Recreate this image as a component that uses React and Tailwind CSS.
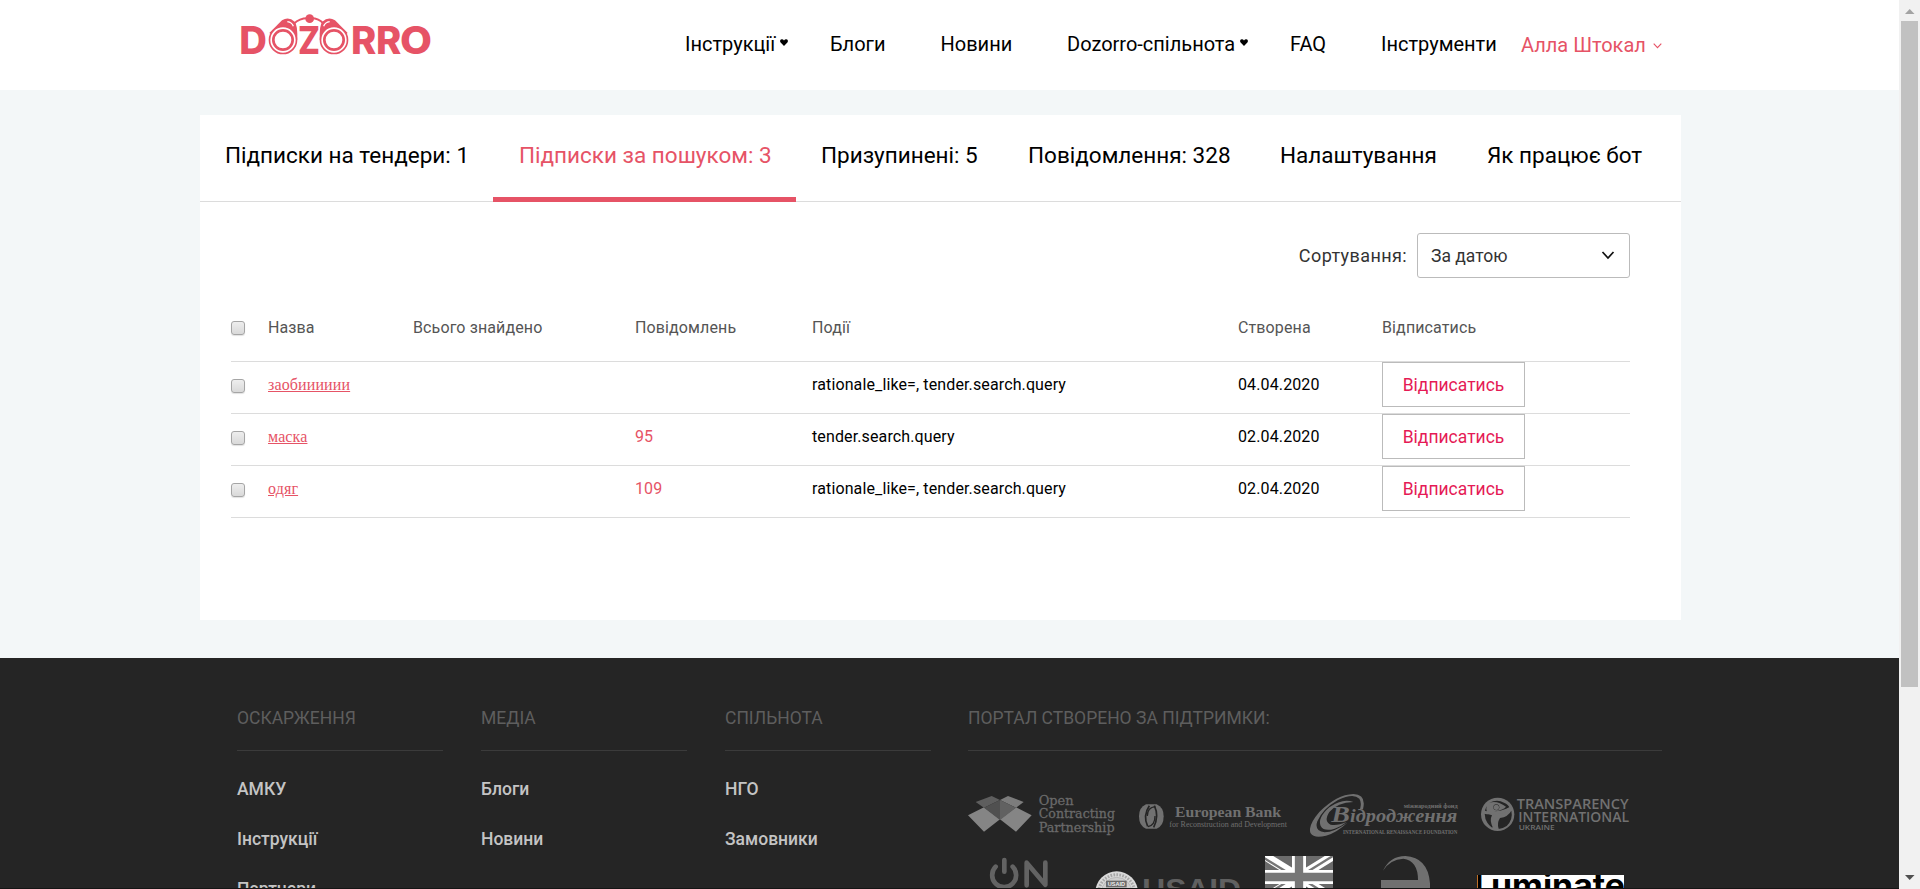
const nav = [
  { label: 'Інструкції', heart: true, w: 'w-[145px]' },
  { label: 'Блоги', w: 'w-[110.5px]' },
  { label: 'Новини', w: 'w-[126.5px]' },
  { label: 'Dozorro-спільнота', heart: true, w: 'w-[223px]' },
  { label: 'FAQ', w: 'w-[91px]' },
  { label: 'Інструменти', w: 'w-[140px]' },
];

const tabs = [
  { label: 'Підписки на тендери: 1', w: 'w-[293px]' },
  { label: 'Підписки за пошуком: 3', w: 'w-[303px]', active: true },
  { label: 'Призупинені: 5', w: 'w-[207px]' },
  { label: 'Повідомлення: 328', w: 'w-[252px]' },
  { label: 'Налаштування', w: 'w-[207px]' },
  { label: 'Як працює бот', w: 'w-[219px]' },
];

const rows = [
  { name: 'заобииииии', count: '', events: 'rationale_like=, tender.search.query', date: '04.04.2020' },
  { name: 'маска', count: '95', events: 'tender.search.query', date: '02.04.2020' },
  { name: 'одяг', count: '109', events: 'rationale_like=, tender.search.query', date: '02.04.2020' },
];

const footerCols = [
  { title: 'ОСКАРЖЕННЯ', links: ['АМКУ', 'Інструкції', 'Партнери'], gap: 'mr-[38px]' },
  { title: 'МЕДІА', links: ['Блоги', 'Новини'], gap: 'mr-[38px]' },
  { title: 'СПІЛЬНОТА', links: ['НГО', 'Замовники'], gap: 'mr-[37px]' },
];

const GRID = 'grid grid-cols-[37px_145px_222px_177px_426px_144px_1fr]';

function Logo() {
  return (
    <svg className="block h-[60px] w-[210px]" viewBox="0 0 630 180" fill="#e65366">
      <g fontFamily="Inter" fontWeight="800" fontSize="113">
        <text x="28" y="146" textLength="83" lengthAdjust="spacingAndGlyphs">D</text>
        <text x="204" y="146" textLength="66" lengthAdjust="spacingAndGlyphs">Z</text>
        <text x="363" y="146" textLength="76" lengthAdjust="spacingAndGlyphs">R</text>
        <text x="438" y="146" textLength="76" lengthAdjust="spacingAndGlyphs">R</text>
        <text x="510" y="146" textLength="96" lengthAdjust="spacingAndGlyphs">O</text>
      </g>
      <path d="M118 84 L156 46 Q176 34 194 50 Q203 60 202 104 H150Z" />
      <path d="M353 84 L315 46 Q295 34 277 50 Q268 60 269 104 H320Z" />
      <path d="M192 56 Q210 38 238 40 Q266 38 280 56" fill="none" stroke="#e65366" strokeWidth="6" />
      <circle cx="239" cy="41" r="13" />
      <path d="M172 50 q14 2 18 14 M299 50 q-14 2 -18 14" fill="none" stroke="#fff" strokeWidth="4" />
      <g fill="#fff" stroke="#e65366">
        <circle cx="159" cy="105" r="40.500" strokeWidth="5" />
        <circle cx="312" cy="105" r="40.500" strokeWidth="5" />
        <circle cx="159" cy="105" r="29" strokeWidth="8" />
        <circle cx="312" cy="105" r="29" strokeWidth="8" />
      </g>
    </svg>
  );
}

function Heart() {
  return (
    <svg className="mt-[-2px] ml-[5px] h-[7px] w-[8px]" viewBox="0 0 8 7">
      <path d="M4 7 L.4 3.2 Q-.4 1.6 .8.5 Q2.6-.5 4 1.4 Q5.4-.5 7.2.5 Q8.4 1.6 7.6 3.2Z" />
    </svg>
  );
}

function Check() {
  return (
    <span className="block h-[14px] w-[14px] rounded-[3px] border border-[#a5a5a5] bg-linear-to-b from-[#eeeeee] to-[#d9d9d9] shadow-[0_1px_1px_#e2e2e2]" />
  );
}

function OpenContracting() {
  return (
    <svg className="h-[50px] w-[171px]" viewBox="84 300 513 150">
      <path d="M84 376 L132 352 L180 388 L132 425Z M275 376 L228 352 L180 388 L228 425Z" fill="#858585" />
      <path d="M107 336 L155 318 L180 330 L132 353Z" fill="#5e5e5e" />
      <path d="M180 330 L204 318 L251 336 L228 353Z" fill="#7c7c7c" />
      <path d="M180 330 L132 353 L180 390Z" fill="#505050" />
      <path d="M180 330 L228 353 L180 390Z" fill="#616161" />
      <g fill="#6a6a6a" stroke="#6a6a6a" strokeWidth=".8" fontFamily="DejaVu Serif" fontSize="37">
        <text x="296" y="344" textLength="105" lengthAdjust="spacingAndGlyphs">Open</text>
        <text x="296" y="385" textLength="229" lengthAdjust="spacingAndGlyphs">Contracting</text>
        <text x="296" y="425" textLength="228" lengthAdjust="spacingAndGlyphs">Partnership</text>
      </g>
    </svg>
  );
}

function EuropeanBank() {
  return (
    <svg className="h-[50px] w-[171px]" viewBox="597 300 513 150">
      <path d="M618 343 H650 Q671 352 671 379 Q671 408 650 416 H618 Q597 408 597 379 Q597 352 618 343Z" fill="#717171" />
      <path d="M628 347 Q608 377 623 409 M643 347 Q658 378 641 412" fill="none" stroke="#252525" strokeWidth="5" />
      <path d="M646 350 Q622 352 622 378 M624 410 Q645 406 645 378" fill="none" stroke="#252525" strokeWidth="4" />
      <g fill="#707070" fontFamily="Liberation Serif">
        <text x="705" y="380" fontSize="44" fontWeight="bold" textLength="318" lengthAdjust="spacingAndGlyphs">European Bank</text>
        <text x="688" y="412" fontSize="23" textLength="353" lengthAdjust="spacingAndGlyphs">for Reconstruction and Development</text>
      </g>
    </svg>
  );
}

function Renaissance() {
  return (
    <svg className="h-[50px] w-[171px]" viewBox="60 300 513 150">
      <g fill="#707070">
        <path d="M219 358 Q230 313 190 312 Q140 314 88 366 Q52 408 62 430 Q72 446 108 437 Q140 428 172 398 Q132 426 104 427 Q72 424 82 394 Q98 356 144 330 Q190 308 208 326 Q216 338 210 358Z" />
        <path d="M190 336 Q158 324 118 352 Q82 384 92 408 Q102 426 134 416 Q156 408 170 396 Q142 408 122 404 Q100 394 118 366 Q142 338 190 336Z" />
      </g>
      <g fill="#707070" fontFamily="Liberation Serif">
        <text x="124" y="396" fontSize="70" fontWeight="bold" fontStyle="italic" textLength="56" lengthAdjust="spacingAndGlyphs">В</text>
        <text x="180" y="396" fontSize="54" fontWeight="bold" fontStyle="italic" textLength="322" lengthAdjust="spacingAndGlyphs">ідродження</text>
        <text x="341" y="353" fontSize="19" fontWeight="bold" textLength="162" lengthAdjust="spacingAndGlyphs">міжнародний фонд</text>
        <text x="159" y="433" fontSize="16" fontWeight="bold" textLength="343" lengthAdjust="spacingAndGlyphs">INTERNATIONAL RENAISSANCE FOUNDATION</text>
      </g>
    </svg>
  );
}

function Transparency() {
  return (
    <svg className="h-[50px] w-[171px]" viewBox="573 300 513 150">
      <circle cx="623" cy="373" r="50" fill="#717171" />
      <circle cx="619" cy="352" r="9" fill="#252525" />
      <path d="M590 348 Q577 374 592 398 Q605 415 608 412 Q598 390 606 376 Q584 370 590 348Z M630 384 Q655 380 664 362 Q670 388 650 408 Q634 418 626 416 Q620 400 630 384Z M598 338 Q622 326 642 338 Q656 344 658 352 Q640 368 612 364 Q642 360 648 350 Q622 330 598 338Z" fill="#252525" />
      <circle cx="619" cy="352" r="8" fill="#717171" />
      <path d="M578 366 Q620 376 664 354" fill="none" stroke="#717171" strokeWidth="9" />
      <g fill="#717171" fontFamily="Open Sans">
        <text x="680" y="358" fontSize="41" fontWeight="600" textLength="336" lengthAdjust="spacingAndGlyphs">TRANSPARENCY</text>
        <text x="685" y="396" fontSize="44" fontWeight="600" textLength="332" lengthAdjust="spacingAndGlyphs">INTERNATIONAL</text>
        <text x="686" y="420" fontSize="22" fontWeight="600" textLength="108" lengthAdjust="spacingAndGlyphs">UKRAINE</text>
      </g>
    </svg>
  );
}

function OnLogo() {
  return (
    <svg className="h-[35px] w-[119px] shrink-0" viewBox="84 492 357 105">
      <g fill="none" stroke="#636363" strokeWidth="14" strokeLinecap="round">
        <path d="M167 530 A36 36 0 1 0 218 530 M193 510 V545" />
        <path d="M260 586 V518 L316 584 V518" strokeLinejoin="round" />
      </g>
    </svg>
  );
}

function Usaid() {
  return (
    <svg className="h-[35px] w-[166px] shrink-0" viewBox="441 492 498 105">
      <circle cx="530" cy="608" r="64" fill="#dadada" />
      <circle cx="530" cy="608" r="54" fill="none" stroke="#a7a7a7" strokeWidth="9" strokeDasharray="5 4" />
      <circle cx="530" cy="608" r="46" fill="#cfcfcf" stroke="#8a8a8a" strokeWidth="1" />
      <rect x="498" y="572" width="62" height="20" fill="#6a6a6a" />
      <text x="503" y="589" fill="#eee" fontFamily="Liberation Sans" fontWeight="bold" fontSize="18" textLength="52" lengthAdjust="spacingAndGlyphs">USAID</text>
      <text x="607" y="628" fill="#606060" fontFamily="Liberation Sans" fontWeight="bold" fontSize="86" textLength="296" lengthAdjust="spacingAndGlyphs">USAID</text>
    </svg>
  );
}

function Flag() {
  return (
    <svg className="h-[35px] w-[93px] shrink-0" viewBox="939 492 279 105">
      <svg x="975" y="498" width="204" height="126" viewBox="0 0 204 126">
        <rect width="204" height="126" fill="#6b6b6b" />
        <path d="M0 0 L204 126 M204 0 L0 126" stroke="#fff" strokeWidth="26" />
        <path d="M-6 4 L96 67 M210 -4 L108 59 M-6 122 L96 59 M108 67 L210 130" stroke="#777" strokeWidth="7" />
        <path d="M102 0 V126 M0 63 H204" stroke="#fff" strokeWidth="42" />
        <path d="M102 0 V126 M0 63 H204" stroke="#777" strokeWidth="25" />
      </svg>
    </svg>
  );
}

function ELogo() {
  return (
    <svg className="h-[35px] w-[114px] shrink-0" viewBox="168 492 342 105">
      <path d="M279 542 Q300 498 346 498 Q414 502 420 580 V597 H273 V570 H384 Q384 512 340 506 Q300 508 279 542Z" fill="#707070" />
    </svg>
  );
}

function Luminate() {
  return (
    <svg className="h-[35px] w-[180px] shrink-0" viewBox="510 492 540 105">
      <rect x="561" y="555" width="441" height="42" fill="#fff" />
      <svg x="561" y="555" width="441" height="42" viewBox="561 555 441 42">
        <text y="620" fontFamily="Inter" fontWeight="700" fontSize="96">
          <tspan x="557" textLength="44" lengthAdjust="spacingAndGlyphs">L</tspan>
          <tspan x="603" textLength="402" lengthAdjust="spacingAndGlyphs">uminate</tspan>
        </text>
      </svg>
    </svg>
  );
}

export default function App() {
  return (
    <div className="flex h-[889px] w-[1920px] overflow-hidden bg-[#f3f7f8] font-['Roboto',sans-serif] text-black">
      <div className="flex w-[1899px] shrink-0 flex-col">
        <header className="flex h-[90px] shrink-0 bg-white pl-[230px]">
          <div className="w-[455px] pt-[5px]"><Logo /></div>
          <nav className="flex h-[87px] items-center whitespace-nowrap text-[20px]">
            {nav.map((n) => (
              <a key={n.label} className={`flex items-center ${n.w}`}>
                {n.label}
                {n.heart && <Heart />}
              </a>
            ))}
            <a className="flex w-[141px] items-center justify-between pt-0.5 text-[20px] text-[#e65366]">
              Алла Штокал
              <svg className="mt-0.5 h-[6px] w-[9px]" viewBox="0 0 9 6" fill="none" stroke="#e65366" strokeWidth="1.1"><path d="M.7.7 L4.5 4.7 L8.3.7" /></svg>
            </a>
          </nav>
        </header>

        <main className="mt-[25px] ml-[200px] h-[505px] w-[1481px] shrink-0 bg-white">
          <div className="flex h-[87px] border-b border-[#dcdcdc] text-[22.5px] whitespace-nowrap">
            {tabs.map((t) => (
              <a
                key={t.label}
                className={`h-[87px] pt-[23px] leading-[34px] ${t.w} ${t.active ? 'border-b-5 border-[#e65366] pl-[26px] text-[#e65366]' : 'pl-[25px]'}`}
              >
                {t.label}
              </a>
            ))}
          </div>

          <div className="mt-[31px] flex items-center justify-end pr-[51px] text-[17.5px] text-[#333]">
            <span className="mr-[10px] text-[18px] tracking-[0.4px]">Сортування:</span>
            <div className="flex h-[45px] w-[213px] items-center justify-between rounded-[3px] border border-[#bbb] pr-[14px] pl-[13px]">
              <span className="pt-0.5">За датою</span>
              <svg className="h-[9px] w-[14px]" viewBox="0 0 14 9" fill="none" stroke="#111" strokeWidth="1.7"><path d="M1.5 1 L7 7 L12.5 1" /></svg>
            </div>
          </div>

          <div className="mt-[16px] ml-[31px] w-[1399px] text-[16px] tracking-[0.12px]">
            <div className={`${GRID} h-[68px] items-center border-b border-[#dcdcdc] text-[#555]`}>
              <Check />
              <span>Назва</span>
              <span>Всього знайдено</span>
              <span>Повідомлень</span>
              <span>Події</span>
              <span>Створена</span>
              <span>Відписатись</span>
            </div>
            {rows.map((r) => (
              <div key={r.name} className={`${GRID} h-[52px] border-b border-[#dcdcdc] leading-[45px]`}>
                <div className="pt-[17px]"><Check /></div>
                <a className="font-['Liberation_Serif',serif] text-[16px] text-[#e65366] underline">{r.name}</a>
                <span />
                <span className="text-[#e65366]">{r.count}</span>
                <span>{r.events}</span>
                <span>{r.date}</span>
                <button className="h-[45px] w-[143px] border border-[#bbb] pt-0.5 text-[17.5px] leading-[41px] tracking-normal text-[#e51a55]">Відписатись</button>
              </div>
            ))}
          </div>
        </main>

        <footer className="mt-[38px] flex h-[231px] shrink-0 overflow-hidden border-b border-[#151515] bg-[#252525] pt-[40px] pl-[237px] text-[17.5px]">
          {footerCols.map((c) => (
            <section key={c.title} className={`w-[206px] shrink-0 ${c.gap}`}>
              <h3 className="h-[53px] border-b border-[#3b3b3b] leading-[40px] text-[#5e5e5e]">{c.title}</h3>
              <ul className="pt-[13px]">
                {c.links.map((l) => (
                  <li key={l} className="h-[50px] leading-[50px] font-medium text-[#c4c4c4]">{l}</li>
                ))}
              </ul>
            </section>
          ))}
          <section className="w-[694px] shrink-0">
            <h3 className="h-[53px] border-b border-[#3b3b3b] leading-[40px] text-[#5e5e5e]">ПОРТАЛ СТВОРЕНО ЗА ПІДТРИМКИ:</h3>
            <div className="mt-[39px] flex">
              <OpenContracting />
              <EuropeanBank />
              <Renaissance />
              <Transparency />
            </div>
            <div className="mt-[14px] flex">
              <OnLogo />
              <Usaid />
              <Flag />
              <ELogo />
              <Luminate />
            </div>
          </section>
        </footer>
      </div>

      <div className="flex w-[21px] flex-col items-center bg-[#f1f1f1]">
        <svg className="h-[21px] w-[21px] shrink-0" viewBox="0 0 21 21"><path d="M6 14 H15.500 L10.700 9Z" fill="#a3a3a3" /></svg>
        <div className="h-[666px] w-[17px] bg-[#c1c1c1]" />
        <svg className="mt-auto h-[21px] w-[21px] shrink-0" viewBox="0 0 21 21"><path d="M6 7 H15.500 L10.700 12Z" fill="#505050" /></svg>
      </div>
    </div>
  );
}
